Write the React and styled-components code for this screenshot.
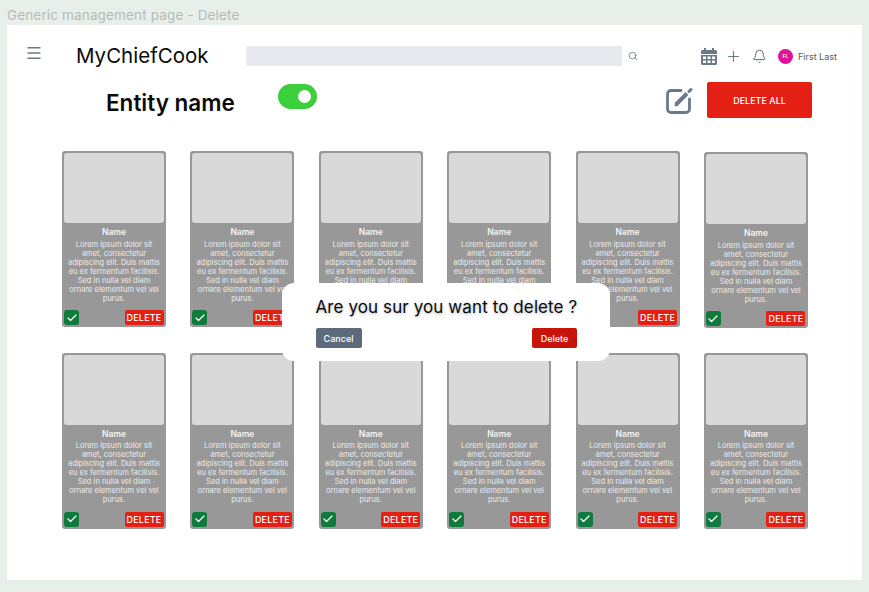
import React from "react";
import styled, { createGlobalStyle } from "styled-components";
import { Bell, Check, Menu, Plus, Search } from "lucide-react";

const GlobalStyle = createGlobalStyle`
  html, body {
    margin: 0;
    padding: 0;
    background: #e8eeea;
    font-family: Inter, "Liberation Sans", sans-serif;
  }
`;

const LOREM =
  "Lorem ipsum dolor sit amet, consectetur adipiscing elit. Duis mattis eu ex fermentum facilisis. Sed in nulla vel diam ornare elementum vel vel purus.";

const CalendarIcon = () => (
  <svg width="16" height="17" viewBox="0 0 16 17" fill="#6b7a8a">
    <rect x="3" y="0" width="2" height="3" />
    <rect x="11" y="0" width="2" height="3" />
    <path d="M1.5 2h13A1.5 1.5 0 0 1 16 3.500V6H0V3.500A1.500 1.500 0 0 1 1.500 2z" />
    <path d="M0 7h16v8.500a1.500 1.500 0 0 1-1.500 1.500h-13A1.500 1.500 0 0 1 0 15.500z" />
    <g fill="#fff">
      <rect x="2" y="8.500" width="3" height="2.500" />
      <rect x="6.500" y="8.500" width="3" height="2.500" />
      <rect x="11" y="8.500" width="3" height="2.500" />
      <rect x="2" y="12.500" width="3" height="2.500" />
      <rect x="6.500" y="12.500" width="3" height="2.500" />
      <rect x="11" y="12.500" width="3" height="2.500" />
    </g>
  </svg>
);

// square with an open corner and a solid pencil crossing it
const EditIcon = () => (
  <svg width="27" height="27" viewBox="0 0 27 27" fill="none" stroke="#6b7a8a">
    <path d="M15 3.500H5a3.500 3.500 0 0 0-3.500 3.500v15A3.500 3.500 0 0 0 5 25.500h15a3.500 3.500 0 0 0 3.500-3.500V12" strokeWidth="2.800" strokeLinecap="round" />
    <path d="M10 17.500l11-11" strokeWidth="4" />
    <path d="M23 4.500l2-2" strokeWidth="3" strokeLinecap="round" />
    <path d="M9 19l.5-3 2.500 2.500z" fill="#6b7a8a" strokeWidth="1" />
  </svg>
);

const Card = ({ nudge }) => (
  <CardBox $nudge={nudge}>
    <Thumb />
    <CardName>Name</CardName>
    <CardText>{LOREM}</CardText>
    <CardFoot>
      <CheckBadge>
        <Check size={12} strokeWidth={2.5} color="#fff" />
      </CheckBadge>
      <DeleteTag>DELETE</DeleteTag>
    </CardFoot>
  </CardBox>
);

const App = () => {
  const cards = Array.from({ length: 12 }, (_, i) => i);
  return (
    <>
      <GlobalStyle />
      <Frame>
        <FrameTitle>Generic management page - Delete</FrameTitle>
        <Panel>
          <TopBar>
            <MenuButton>
              <Menu size={18} color="#6b7a8a" strokeWidth={1.8} />
            </MenuButton>
            <Logo>MyChiefCook</Logo>
            <SearchBox />
            <SearchIcon>
              <Search size={10} color="#6b7a8a" />
            </SearchIcon>
            <TopActions>
              <CalendarIcon />
              <Plus size={17} color="#6b7a8a" strokeWidth={1.6} />
              <BellIcon size={15} color="#56626e" strokeWidth={1.5} />
              <User>
                <Avatar>FL</Avatar>
                <UserName>First Last</UserName>
              </User>
            </TopActions>
          </TopBar>
          <EntityBar>
            <EntityName>Entity name</EntityName>
            <Toggle />
            <EntityActions>
              <EditIcon />
              <DeleteAll>DELETE ALL</DeleteAll>
            </EntityActions>
          </EntityBar>
          <CardGrid>
            {cards.map((i) => (
              <Card key={i} nudge={i === 5} />
            ))}
          </CardGrid>
          <Modal>
            <ModalTitle>Are you sur you want to delete ?</ModalTitle>
            <ModalActions>
              <CancelButton>Cancel</CancelButton>
              <ConfirmButton>Delete</ConfirmButton>
            </ModalActions>
          </Modal>
        </Panel>
      </Frame>
    </>
  );
};

export default App;

const Frame = styled.div`
  width: 869px;
  height: 592px;
  padding: 7px 7px 0;
  box-sizing: border-box;
  overflow: hidden;
`;

const FrameTitle = styled.div`
  height: 18px;
  font-size: 13.500px;
  line-height: 16px;
  letter-spacing: 0.15px;
  color: #b4bcb7;
  white-space: nowrap;
`;

const Panel = styled.div`
  position: relative;
  width: 855px;
  height: 555px;
  background: #fff;
  padding: 20px 0 0 0;
  box-sizing: border-box;
`;

const TopBar = styled.div`
  display: flex;
  align-items: center;
  height: 22px;
`;

const MenuButton = styled.div`
  width: 18px;
  margin-left: 18px;
  display: flex;
  margin-top: -6px;
`;

const Logo = styled.div`
  margin-left: 33px;
  width: 170px;
  font-size: 20.500px;
  color: #0a0a0a;
  white-space: nowrap;
  margin-top: -1px;
`;

const SearchBox = styled.div`
  width: 376px;
  height: 20px;
  background: #e6e9ee;
  border-radius: 2px;
`;

const SearchIcon = styled.div`
  display: flex;
  margin-left: 6px;
`;

const TopActions = styled.div`
  display: flex;
  align-items: center;
  margin-left: 63px;
  gap: 8px;
`;

const BellIcon = styled(Bell)`
  margin-left: 2px;
`;

const User = styled.div`
  display: flex;
  align-items: center;
  gap: 5px;
  margin-left: 3px;
`;

const Avatar = styled.div`
  width: 15px;
  height: 15px;
  border-radius: 50%;
  background: #e0119b;
  color: #fff;
  font-size: 5px;
  font-weight: 600;
  display: flex;
  align-items: center;
  justify-content: center;
`;

const UserName = styled.div`
  font-size: 9px;
  color: #4f5b67;
`;

const EntityBar = styled.div`
  display: flex;
  align-items: flex-start;
  height: 69px;
  margin-top: 15px;
`;

const EntityName = styled.div`
  margin-left: 99px;
  width: 172px;
  font-size: 22.500px;
  font-weight: 600;
  line-height: 27px;
  color: #0a0a0a;
  margin-top: 7px;
`;

const Toggle = styled.div`
  position: relative;
  width: 39px;
  height: 25px;
  border-radius: 13px;
  background: #3ccf3c;
  margin-top: 2px;

  &::after {
    content: "";
    position: absolute;
    top: 6px;
    right: 6px;
    width: 13px;
    height: 13px;
    border-radius: 50%;
    background: #fff;
  }
`;

const EntityActions = styled.div`
  display: flex;
  align-items: center;
  gap: 14px;
  margin-left: 349px;
`;

const DeleteAll = styled.button`
  width: 105px;
  height: 36px;
  border: none;
  border-radius: 2px;
  background: #e41f13;
  color: #fff;
  font-family: inherit;
  font-size: 9px;
  font-weight: 500;
`;

const CardGrid = styled.div`
  display: grid;
  grid-template-columns: repeat(6, 104px);
  column-gap: 24.4px;
  row-gap: 24.500px;
  margin-left: 55px;
`;

const CardBox = styled.div`
  width: 104px;
  height: 176px;
  box-sizing: border-box;
  border-radius: 3px;
  background: #989898;
  border: 2px solid #989898;
  display: flex;
  flex-direction: column;
  align-items: center;
  margin-top: ${(p) => (p.$nudge ? "1px" : "0")};
`;

const Thumb = styled.div`
  width: 100%;
  height: 70px;
  flex: none;
  background: #d9d9d9;
  border-radius: 3px;
`;

const CardName = styled.div`
  margin-top: 3px;
  font-size: 8.500px;
  line-height: 12px;
  font-weight: 600;
  color: #f4f4f4;
`;

const CardText = styled.div`
  margin-top: 1.500px;
  width: 96px;
  font-size: 7.500px;
  line-height: 9px;
  text-align: center;
  color: #ececec;
`;

const CardFoot = styled.div`
  margin-top: auto;
  align-self: stretch;
  display: flex;
  justify-content: space-between;
  align-items: center;
  padding: 0 0.500px 0 0;
`;

const CheckBadge = styled.div`
  width: 15px;
  height: 15px;
  border-radius: 3px;
  background: #0e7a3c;
  display: flex;
  align-items: center;
  justify-content: center;
`;

const DeleteTag = styled.div`
  width: 39px;
  height: 15px;
  border-radius: 2px;
  background: #e41f13;
  color: #fff;
  font-size: 9px;
  font-weight: 500;
  letter-spacing: 0.2px;
  line-height: 15px;
  text-align: center;
`;

const Modal = styled.div`
  position: absolute;
  left: 275px;
  top: 258px;
  width: 328px;
  height: 78px;
  box-sizing: border-box;
  background: #fff;
  border-radius: 12px;
  padding: 13px 33px 0 33.500px;
`;

const ModalTitle = styled.div`
  font-size: 17px;
  line-height: 22px;
  font-weight: 400;
  letter-spacing: 0.1px;
  color: #0a0a0a;
  white-space: nowrap;
  text-shadow: 0 1px 3px rgba(0, 0, 0, 0.3);
`;

const ModalActions = styled.div`
  display: flex;
  justify-content: space-between;
  margin-top: 10px;
`;

const CancelButton = styled.button`
  width: 46px;
  height: 20px;
  border: none;
  border-radius: 2px;
  padding: 0;
  background: #5c6a7c;
  color: #fff;
  font-family: inherit;
  font-size: 9px;
  font-weight: 500;
`;

const ConfirmButton = styled(CancelButton)`
  width: 45px;
  background: #c8130a;
`;
